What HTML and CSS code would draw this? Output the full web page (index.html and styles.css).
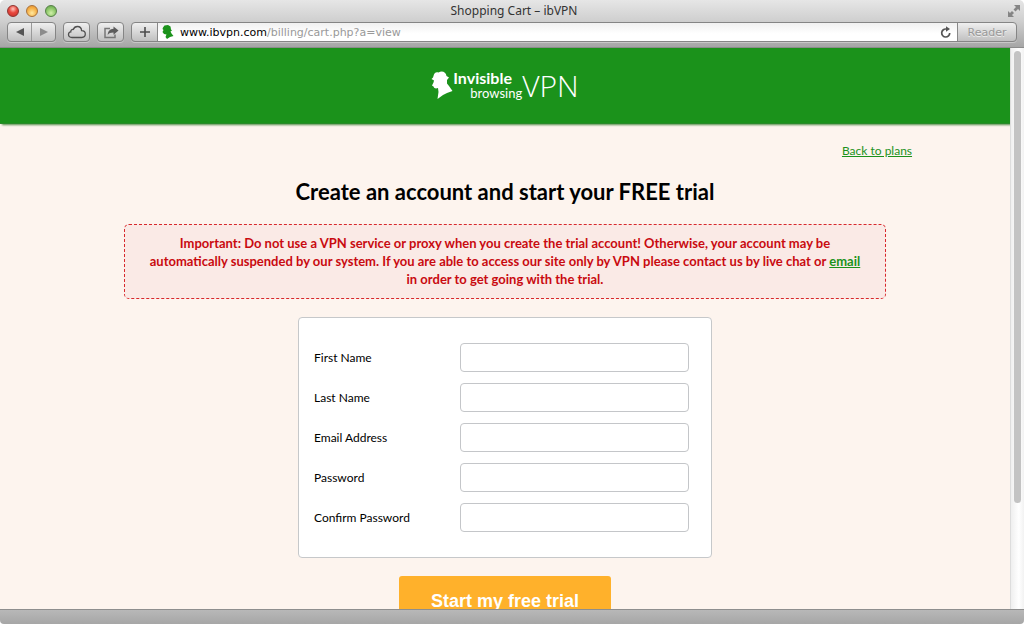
FILE: index.html
```html
<!DOCTYPE html>
<html lang="en">
<head>
<meta charset="utf-8">
<title>Shopping Cart – ibVPN</title>
<link rel="stylesheet" href="styles.css">
</head>
<body>
<div class="chrome">
  <div class="titlebar">
    <div class="lights">
      <button class="light light-close" aria-label="Close"></button>
      <button class="light light-min" aria-label="Minimize"></button>
      <button class="light light-zoom" aria-label="Zoom"></button>
    </div>
    <div class="title">Shopping Cart – ibVPN</div>
    <button class="fullscreen" aria-label="Full screen">
      <svg width="14" height="14" viewBox="0 0 14 14" fill="#858585"><path d="M7 1h6v6l-2-2-2.500 2.500-2-2L9 3z"/><path d="M7 13H1V7l2 2 2-2 2 2-2 2z"/></svg>
    </button>
  </div>
  <div class="toolbar">
    <div class="pair">
      <button aria-label="Back"><svg width="10" height="10" viewBox="0 0 10 10"><path d="M9 1v8L1 5z" fill="#555"/></svg></button>
      <button aria-label="Forward"><svg width="10" height="10" viewBox="0 0 10 10"><path d="M1 1v8l8-4z" fill="#8c8c8c"/></svg></button>
    </div>
    <button class="tool" aria-label="iCloud tabs"><svg width="20" height="14" viewBox="0 0 20 14" fill="none" stroke="#505050" stroke-width="1.300"><path d="M5 12.500C2.500 12.500 1.500 11 1.500 9.500S2.600 7 3.800 6.900C3.500 5.200 5 4.100 6.300 4.500 7 2.500 8.500 1.500 10.400 1.500c2.500 0 4.100 1.800 4.200 4.200 2.200 0 3.700 1.500 3.700 3.400 0 2-1.500 3.400-3.500 3.400z"/></svg></button>
    <button class="tool" aria-label="Share"><svg width="16" height="13" viewBox="0 0 16 13" fill="none"><path d="M7 2.500H2v9h10V8.500" stroke="#777" stroke-width="1.500"/><path d="M15.500 4.500 10.500 0.500v2.300C7 3 5 5 4.700 9 6 7.200 7.500 6.500 10.500 6.500v2.300z" fill="#5c5c5c"/></svg></button>
    <div class="address">
      <button class="add" aria-label="Add bookmark"><svg width="10" height="10" viewBox="0 0 10 10"><path d="M5 0v10M0 5h10" stroke="#4c4c4c" stroke-width="1.600"/></svg></button>
      <div class="field">
        <svg class="favicon" viewBox="0 0 24 28" fill="#1b921b"><path d="M2 5 5 1 12 0 17 3 18 9 20 11 17 13 19 17 23 22 16 24 10 28 7 24 9 19 4 18 1 14 3 10 1 8z"/></svg>
        <div class="url"><span class="host">www.ibvpn.com</span>/billing/cart.php?a=view</div>
        <button class="reload" aria-label="Reload"><svg width="12" height="13" viewBox="0 0 12 13"><path d="M9.700 7A4 4 0 1 1 6 3" fill="none" stroke="#555" stroke-width="1.700"/><path d="M6 0.300 10 3 6 5.800z" fill="#555"/></svg></button>
      </div>
      <button class="reader" disabled>Reader</button>
    </div>
  </div>
</div>
<div class="view">
  <div class="page">
    <header class="site-header">
      <div class="logo">
        <svg class="head" viewBox="0 0 22 28" fill="#fff"><path d="M2.500 5C3 2 5 .5 7.500 1.500 11-.5 15 1 15.500 5L18 6.500 16 9 16 12.500 18 15 21.500 20 16 22 12 24 6.500 28 7.500 21 7 17C5 18 3 17.500 2.500 15.500L1 14.500 2.500 11.500 3 9.500 .5 8 2 6.500z"/></svg>
        <div class="words"><div class="invisible">Invisible</div><div class="browsing">browsing</div></div>
        <div class="vpn">VPN</div>
      </div>
    </header>
    <main>
      <nav class="top-links"><a href="#">Back to plans</a></nav>
      <h1>Create an account and start your FREE trial</h1>
      <p class="notice">Important: Do not use a VPN service or proxy when you create the trial account! Otherwise, your account may be<br>automatically suspended by our system. If you are able to access our site only by VPN please contact us by live chat or <a href="#">email</a><br>in order to get going with the trial.</p>
      <form>
        <div class="card">
          <label for="first">First Name</label><input id="first" type="text">
          <label for="last">Last Name</label><input id="last" type="text">
          <label for="email">Email Address</label><input id="email" type="email">
          <label for="pass">Password</label><input id="pass" type="password">
          <label for="confirm">Confirm Password</label><input id="confirm" type="password">
        </div>
        <button class="start" type="submit">Start my free trial</button>
      </form>
    </main>
  </div>
  <div class="scrollbar"><div class="thumb"></div></div>
</div>
<div class="statusbar"></div>
</body>
</html>
```
FILE: styles.css
```css
* { box-sizing: border-box; }
body {
  margin: 0;
  height: 100vh;
  display: flex;
  flex-direction: column;
  overflow: hidden;
  background: #fff;
  font-family: Lato, "Open Sans", sans-serif;
}
button { padding: 0; border: 0; background: none; font: inherit; display: flex; align-items: center; justify-content: center; }
svg { display: block; flex: none; }

.chrome {
  background: linear-gradient(#e6e6e6, #cfcfcf 45%, #a6a6a6);
  border-bottom: 1px solid #8c8c8c;
  border-radius: 5px 5px 0 0;
  font-family: "DejaVu Sans", sans-serif;
}
.titlebar { height: 21px; display: grid; grid-template-columns: 1fr auto 1fr; align-items: center; padding: 0 3px 0 7px; }
.lights { display: flex; gap: 7px; }
.light { width: 12px; height: 12px; border-radius: 50%; border: 1px solid #777; }
.light-close { background: radial-gradient(circle at 50% 30%, #ffc5bd, #e8493f 45%, #c5302a); border-color: #8e3530; }
.light-min { background: radial-gradient(circle at 50% 70%, #ffe9a0, #f5ad42 60%, #e08f30); border-color: #a8713a; }
.light-zoom { background: radial-gradient(circle at 50% 70%, #d0f0a8, #86c263 60%, #5f9f4a); border-color: #557f47; }
.title { font-family: "Noto Sans", sans-serif; font-size: 12px; line-height: 20px; color: #333; }
.fullscreen { justify-self: end; }
.toolbar { height: 26px; display: flex; align-items: flex-start; padding: 1px 7px 0; gap: 7px; }
.pair, .tool, .address { height: 20px; border: 1px solid #858585; border-radius: 4px; background: linear-gradient(#efefef, #c0c0c0); box-shadow: 0 1px 0 #c8c8c8; }
.pair { width: 49px; display: flex; }
.pair button { flex: 1; }
.pair button + button { border-left: 1px solid #999; }
.tool { width: 27px; }
.address { flex: 1; display: flex; }
.add { width: 25px; }
.field { flex: 1; display: flex; align-items: center; padding: 0 5px 0 4px; border: solid #888; border-width: 0 1px; background: linear-gradient(#f1f1f1, #fff 60%); }
.favicon { width: 12px; height: 14px; }
.url { flex: 1; margin-left: 6px; padding-top: 1px; font-size: 11px; line-height: 17px; color: #999; }
.host { color: #000; }
.reader { width: 58px; font-size: 11px; color: #999; text-shadow: 0 1px 0 #eee; }

.view { flex: 1; min-height: 0; display: flex; }
.page { flex: 1; overflow: hidden; background: #fdf4ee; }
.site-header { height: 76px; background: #1b921b; border-bottom: 1px solid #2a8a2a; box-shadow: 2px 1px 2px #4f8a45; display: flex; justify-content: center; }
.logo { display: flex; align-items: flex-start; padding-top: 18px; color: #fff; }
.head { width: 22px; height: 28px; margin-top: 5px; }
.words { width: 69px; padding-top: 4px; }
.invisible { font-size: 16px; line-height: 15px; font-weight: 700; }
.browsing { font-size: 13px; line-height: 16px; text-align: right; }
.vpn { font-family: "Open Sans", sans-serif; font-size: 30px; line-height: 40px; font-weight: 300; }

.top-links { width: 81%; margin: 0 auto; padding: 18px 2px 0; text-align: right; font-size: 12px; line-height: 18px; }
a { color: #1b921b; text-decoration: underline; }
h1 { margin: 16px 0; font-size: 22px; line-height: 32px; font-weight: 700; text-align: center; color: #000; }
.notice {
  width: 762px;
  max-width: 95%;
  margin: 0 auto 18px;
  padding: 9px 8px 10px;
  border: 1px dashed #d8282c;
  border-radius: 5px;
  background: #faeae6;
  color: #c90a10;
  font-size: 13px;
  line-height: 18px;
  font-weight: 700;
  text-align: center;
}
form { display: flex; flex-direction: column; align-items: center; }
.card {
  width: 414px;
  max-width: 95%;
  display: grid;
  grid-template-columns: 1fr 229px;
  row-gap: 11px;
  align-items: center;
  padding: 25px 22px 25px 15px;
  border: 1px solid #c6c8ca;
  border-radius: 4px;
  background: #fff;
}
.card label { font-size: 12px; color: #000; }
.card input { width: 100%; height: 29px; padding: 0 8px; border: 1px solid #c4c6c9; border-radius: 4px; background: #fff; font: inherit; font-size: 12px; }
.start { width: 212px; height: 50px; margin-top: 18px; border-radius: 3px; background: #ffb12b; color: #fff; font-family: "Liberation Sans", Arial, sans-serif; font-size: 18px; font-weight: 700; }

.scrollbar { width: 14px; padding: 3px 3px 0; border-left: 1px solid #ddd; background: linear-gradient(90deg, #efefef, #fff 60%, #f2f2f2); }
.thumb { width: 7px; height: 81%; border-radius: 4px; background: #c3c3c3; }
.statusbar { height: 15px; border-top: 1px solid #8e8e8e; border-radius: 0 0 4px 4px; background: linear-gradient(#b8b8b8, #a6a6a6); }
```
